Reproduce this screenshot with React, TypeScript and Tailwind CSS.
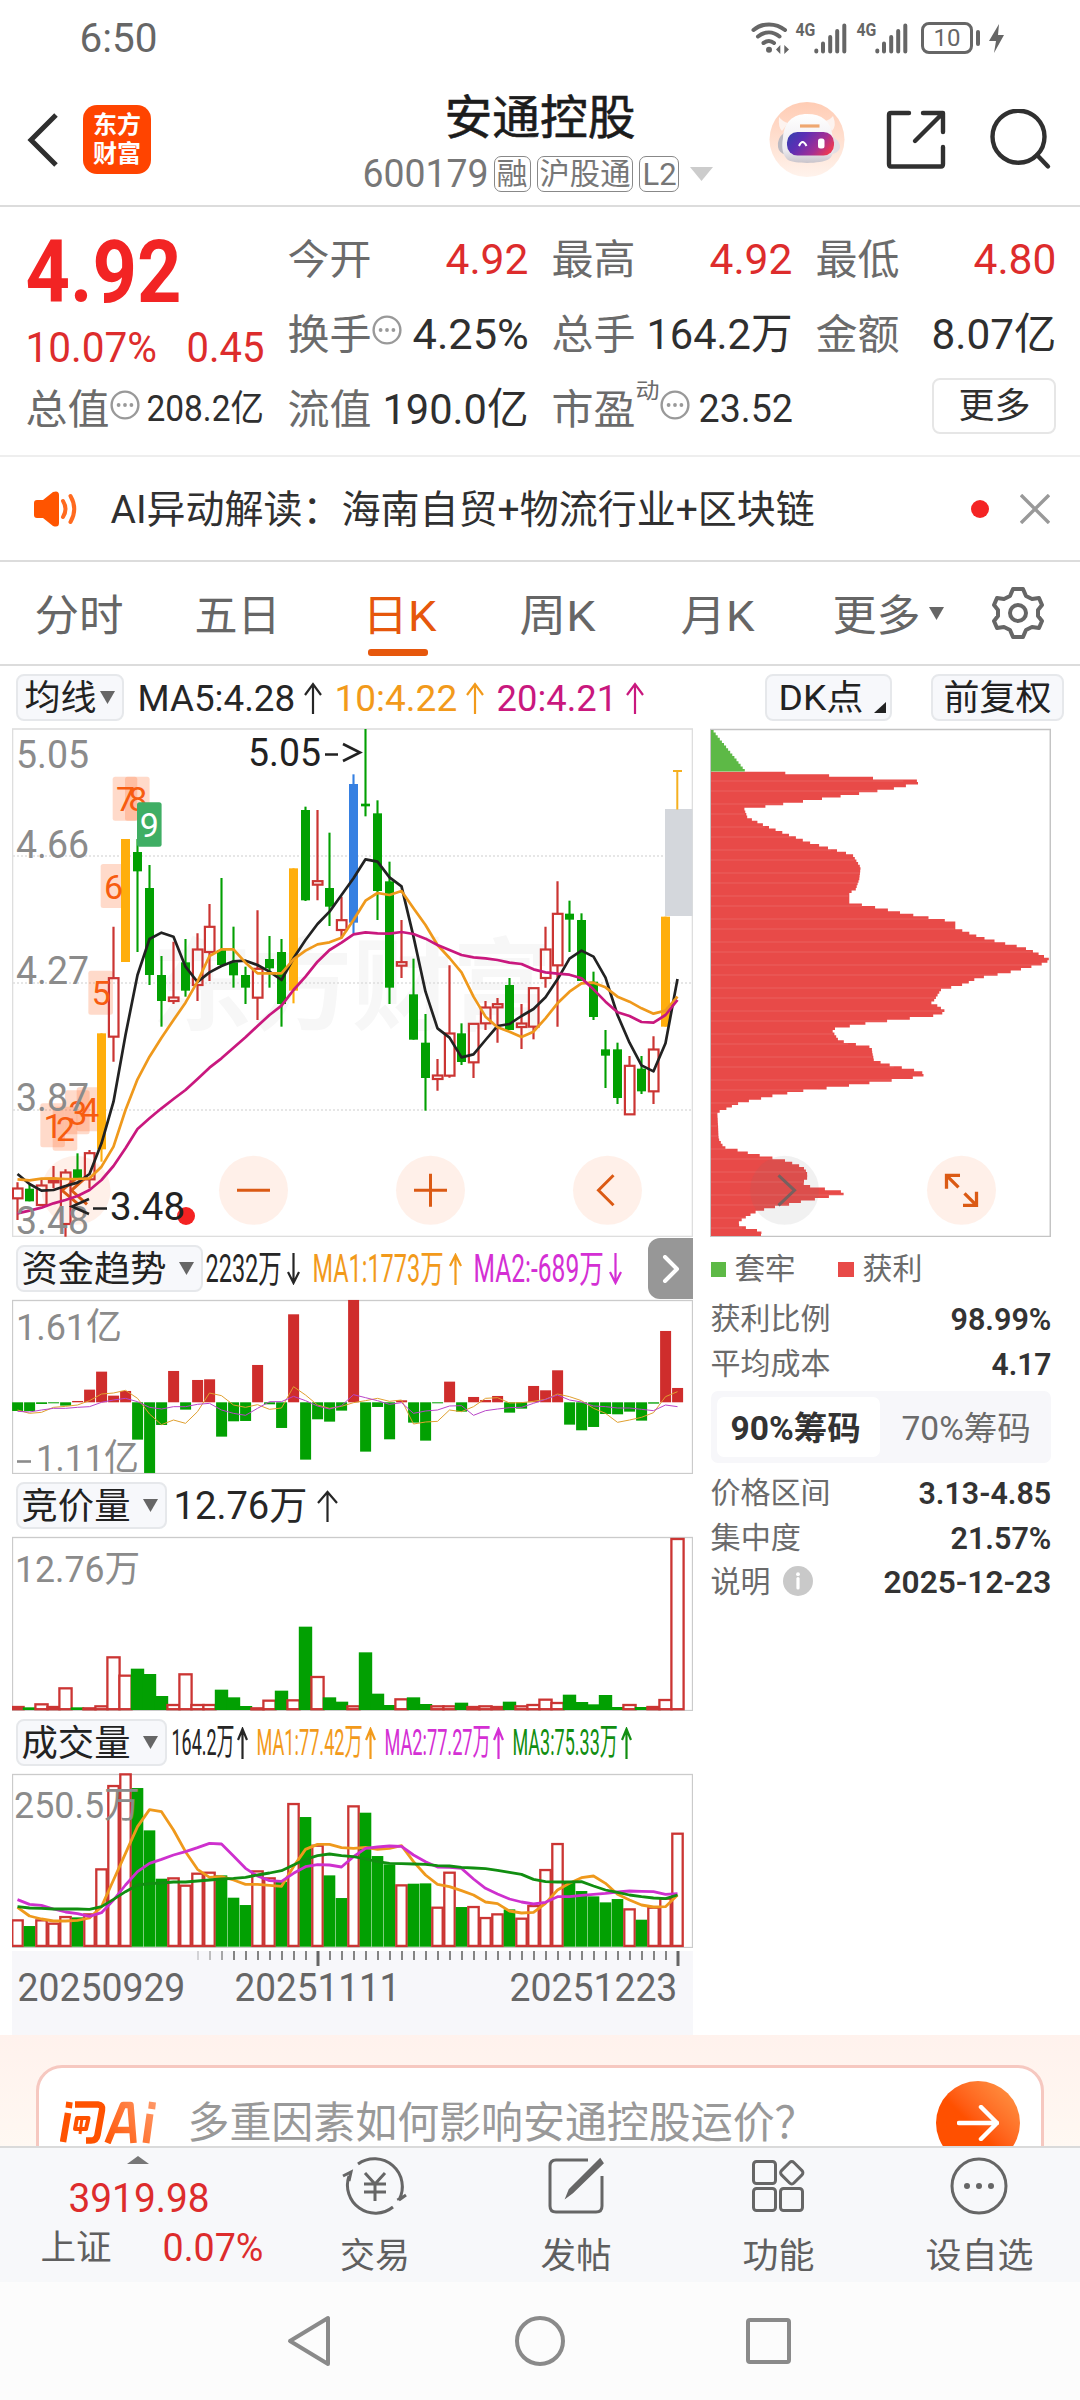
import { useLayoutEffect, useRef, useState } from "react";
import type { ReactNode } from "react";

const GREEN = "#02a002";
const RED = "#cb3533";
const N = 56;
const cx = (i: number) => 17.5 + 12 * i;

/* Text stretched horizontally so that it fills a fixed width. */
function Fit({ w, className = "", children }: { w: number; className?: string; children: ReactNode }) {
  const ref = useRef<HTMLSpanElement>(null);
  const [k, setK] = useState(1);
  useLayoutEffect(() => {
    if (ref.current) setK((w + 3) / ref.current.offsetWidth);
  }, [w]);
  return (
    <span className={"inline-flex shrink-0 whitespace-nowrap " + className} style={{ width: w }}>
      <span
        ref={ref}
        className="inline-block shrink-0 origin-left"
        style={{ transform: `translateX(-1.5px) scaleX(${k})` }}
      >
        {children}
      </span>
    </span>
  );
}

function Arrow({ w, down = false, className = "" }: { w: number; down?: boolean; className?: string }) {
  return (
    <svg width={w} height={32} viewBox={`0 0 ${w} 32`} className={"shrink-0 " + className} fill="none" stroke="currentColor" strokeWidth={2.2}>
      <path d={down ? `M${w / 2} 0V30M1 19L${w / 2} 30L${w - 1} 19` : `M${w / 2} 32V2M1 13L${w / 2} 2L${w - 1} 13`} />
    </svg>
  );
}

function Caret({ className = "" }: { className?: string }) {
  return (
    <svg width={15} height={13} viewBox="0 0 15 13" className={"shrink-0 " + className}>
      <path d="M0 0H15L7.5 13Z" fill="currentColor" />
    </svg>
  );
}

function Dots({ className = "" }: { className?: string }) {
  return (
    <svg width={30} height={30} viewBox="0 0 30 30" className={"relative -top-1 shrink-0 " + className}>
      <circle cx={15} cy={15} r={13.4} fill="none" stroke="#999" strokeWidth={2.4} />
      <circle cx={8.6} cy={15} r={1.9} fill="#999" />
      <circle cx={15} cy={15} r={1.9} fill="#999" />
      <circle cx={21.4} cy={15} r={1.9} fill="#999" />
    </svg>
  );
}

function Label({ x, y, w, size = 39, fill = "#8b8b8b", children }: { x: number; y: number; w: number; size?: number; fill?: string; children: string }) {
  return (
    <text x={x - 1} y={y} textLength={w + 2} lengthAdjust="spacingAndGlyphs" fontSize={size} fill={fill}>
      {children}
    </text>
  );
}

function Signal() {
  return (
    <svg width={33} height={31} viewBox="0 0 33 31" className="shrink-0">
      <g stroke="#666" strokeWidth={4} strokeLinecap="round">
        <path d="M2.3 28.5V27.5M9 28.5V20.5M16.200 28.5V14M23.200 28.5V8M30.300 28.5V2.500" />
      </g>
    </svg>
  );
}

function StatusBar() {
  return (
    <div className="flex h-[76px] items-center text-[#666]">
      <Fit w={75} className="ml-[81px] text-[41px] leading-[76px]">6:50</Fit>
      <div className="ml-[595px] flex h-8 items-start">
        <svg width={38} height={32} viewBox="0 0 38 32" fill="none" stroke="#666" strokeWidth={4} strokeLinecap="round">
          <path d="M2.500 8C11 0.500 25 0.500 34 8M7 14.500C14 9 22 9 28.500 14.500M12.500 21C16 18.500 20 18.500 23 21" />
          <circle cx={18} cy={27.700} r={3} fill="#666" stroke="none" />
          <path d="M25 27.500L29.300 23V32ZM38 27.500L33.300 23V32Z" fill="#666" stroke="none" />
        </svg>
        <Fit w={17} className="ml-[8px] text-[19px] leading-[16px] font-bold">4G</Fit>
        <div className="mt-px"><Signal /></div>
        <Fit w={17} className="ml-[11px] text-[19px] leading-[16px] font-bold">4G</Fit>
        <div className="mt-px"><Signal /></div>
        <div className="ml-[13px] flex h-8 w-[52px] items-center justify-center rounded-[8px] border-[3px] border-[#666] text-[24px] leading-none">
          <Fit w={24}>10</Fit>
        </div>
        <div className="mt-2 ml-[3px] h-4 w-[4px] rounded bg-[#666]" />
        <svg width={16} height={30} viewBox="0 0 16 30" className="mt-0.5 ml-[9px]">
          <path d="M10 0L0 17H7L5 29L15 11H9Z" fill="#666" />
        </svg>
      </div>
    </div>
  );
}

function Robot() {
  return (
    <svg width={78} height={78} viewBox="769 101 78 78">
      <defs>
        <linearGradient id="halo" x1="0" y1="0" x2="0" y2="1">
          <stop offset="0" stopColor="#ffccb4" />
          <stop offset="1" stopColor="#fff3ec" />
        </linearGradient>
        <linearGradient id="visor" x1="0" y1="0.2" x2="1" y2="0.6">
          <stop offset="0" stopColor="#3a3fae" />
          <stop offset="0.3" stopColor="#5b2fb5" />
          <stop offset="0.7" stopColor="#a22f95" />
          <stop offset="1" stopColor="#ea3a55" />
        </linearGradient>
        <linearGradient id="shell" x1="0" y1="0" x2="0" y2="1">
          <stop offset="0" stopColor="#ffffff" />
          <stop offset="0.75" stopColor="#eceaee" />
          <stop offset="1" stopColor="#c9c4cb" />
        </linearGradient>
      </defs>
      <circle cx={808} cy={139.5} r={37.5} fill="url(#halo)" />
      <path d="M780 117Q779 127 783 131L789 123Q784 122 780 117ZM834 116Q838 126 833 131L826 121Q831 120 834 116Z" fill="#fdf3ef" />
      <path d="M785 133Q778 138 779 147Q780 153 787 155Z" fill="#bcbac2" />
      <path d="M834 137Q842 142 841 148Q839 153 833 154Z" fill="#e2dfe4" />
      <path d="M784 138C785 122 794 114 808 114C823 114 832 121 833.500 136C836 146 835 156 830 159C822 164 797 164 789 160C784 156 782 148 784 138Z" fill="url(#shell)" />
      <rect x={788} y={132} width={47} height={23.500} rx={10.500} fill="url(#visor)" />
      <path d="M800 146Q803.500 138 807.500 146" fill="none" stroke="#fff" strokeWidth={2} />
      <rect x={819} y={138.500} width={6.500} height={10} rx={2.500} fill="#fff" />
      <path d="M801 126H820.500" stroke="#efa770" strokeWidth={3.200} />
    </svg>
  );
}

function Header() {
  return (
    <div className="flex h-[131px] border-b-2 border-[#dcdcdc]">
      <div className="mt-[37px] ml-[27px] flex h-[54px] w-8 items-center">
        <svg width={32} height={54} viewBox="0 0 32 54" fill="none" stroke="#2f2f2f" strokeWidth={5}>
          <path d="M29 2L4 27L29 52" />
        </svg>
      </div>
      <div className="mt-[29px] ml-[24px] flex h-[69px] w-[68px] flex-col items-center justify-center rounded-[14px] bg-[#ff4400] text-[24px] leading-[29px] font-bold text-white">
        <div>东方</div>
        <div>财富</div>
      </div>
      <div className="ml-[213px] flex w-[350px] flex-col">
        <div className="flex h-[79px] items-center pt-[4px] pl-[82px]">
          <Fit w={188} className="text-[47px] leading-[62px] text-[#1c1c1c] [-webkit-text-stroke:0.6px_#1c1c1c]">安通控股</Fit>
        </div>
        <div className="flex h-[38px] items-center text-[#777]">
          <Fit w={123} className="text-[38px] leading-[38px]">600179</Fit>
          <div className="ml-[7px] flex h-9 w-[37px] items-center rounded-[7px] border border-[#888] pl-[3px] text-[30px] leading-none"><Fit w={28}>融</Fit></div>
          <div className="ml-[6px] flex h-9 w-[96px] items-center rounded-[7px] border border-[#888] pl-[3px] text-[30px] leading-none"><Fit w={88}>沪股通</Fit></div>
          <div className="ml-[6px] flex h-9 w-[40px] items-center rounded-[7px] border border-[#888] pl-[4px] text-[31px] leading-none"><Fit w={31}>L2</Fit></div>
          <svg width={23} height={14} viewBox="0 0 23 14" className="ml-[11px]"><path d="M0 0H23L11.500 14Z" fill="#ccc" /></svg>
        </div>
      </div>
      <div className="mt-[25px] ml-[54px] flex h-[78px] items-center">
        <Robot />
        <svg width={60} height={60} viewBox="0 0 60 60" fill="none" stroke="#303030" strokeWidth={4.400} strokeLinecap="round" strokeLinejoin="round" className="ml-[40px]">
          <path d="M23 3H5Q3 3 3 5V54Q3 56.500 5 56.500H55Q57 56.500 57 54V37" />
          <path d="M37 3H57V22M56 4L29 31" />
        </svg>
        <svg width={62} height={62} viewBox="0 0 62 62" fill="none" stroke="#303030" strokeWidth={4.400} strokeLinecap="round" className="ml-[44px]">
          <circle cx={28.500} cy={27.700} r={26} />
          <path d="M47 46L58 57.500" />
        </svg>
      </div>
    </div>
  );
}

function Name({ children }: { children: string }) {
  return <Fit w={81} className="relative top-[1.5px] text-[41px] leading-[50px] text-[#6b6b6b]">{children}</Fit>;
}

function Quote() {
  const red = "text-[43px] leading-[50px] text-[#dd2c2c]";
  const dark = "text-[43px] leading-[50px] text-[#2f2f2f]";
  return (
    <div className="flex h-[250px] gap-[26px] border-b-2 border-[#eee] pt-[14px] pl-[27px]">
      <div className="flex w-[236px] flex-col">
        <div className="flex h-[101px] items-center"><Fit w={153} className="text-[88px] leading-[100px] font-bold text-[#f22424]">4.92</Fit></div>
        <div className="flex h-[49px] items-center justify-between">
          <Fit w={129} className={red}>10.07%</Fit>
          <Fit w={75} className={red}>0.45</Fit>
        </div>
        <div className="flex h-[75px] items-center">
          <Name>总值</Name>
          <Dots className="ml-[2px]" />
          <Fit w={114} className="ml-[8px] text-[36px] leading-[50px] text-[#2f2f2f]">208.2亿</Fit>
        </div>
      </div>
      <div className="flex w-[238px] flex-col">
        <div className="flex h-[75px] items-center justify-between"><Name>今开</Name><Fit w={80} className={red}>4.92</Fit></div>
        <div className="flex h-[75px] items-center"><Name>换手</Name><Dots className="ml-[2px]" /><Fit w={113} className={"ml-auto " + dark}>4.25%</Fit></div>
        <div className="flex h-[75px] items-center justify-between"><Name>流值</Name><Fit w={143} className={dark}>190.0亿</Fit></div>
      </div>
      <div className="flex w-[238px] flex-col">
        <div className="flex h-[75px] items-center justify-between"><Name>最高</Name><Fit w={80} className={red}>4.92</Fit></div>
        <div className="flex h-[75px] items-center justify-between"><Name>总手</Name><Fit w={143} className={dark}>164.2万</Fit></div>
        <div className="flex h-[75px] items-center">
          <Name>市盈</Name>
          <Fit w={21} className="relative -top-[18px] ml-[3px] text-[22px] leading-[22px] text-[#6b6b6b]">动</Fit>
          <Dots className="ml-[2px]" />
          <Fit w={91} className="ml-auto text-[38px] leading-[50px] text-[#2f2f2f]">23.52</Fit>
        </div>
      </div>
      <div className="flex w-[238px] flex-col">
        <div className="flex h-[75px] items-center justify-between"><Name>最低</Name><Fit w={80} className={red}>4.80</Fit></div>
        <div className="flex h-[75px] items-center justify-between"><Name>金额</Name><Fit w={122} className={dark}>8.07亿</Fit></div>
        <div className="flex h-[75px] items-center justify-end">
          <div className="relative -top-[3px] left-px flex h-[56px] w-[124px] items-center justify-center rounded-[8px] border-2 border-[#e6e6e6]">
            <Fit w={69} className="relative top-px text-[35px] leading-[50px] text-[#2f2f2f]">更多</Fit>
          </div>
        </div>
      </div>
    </div>
  );
}

function Notice() {
  return (
    <div className="flex h-[105px] items-center border-b-2 border-[#dcdcdc]">
      <svg width={44} height={36} viewBox="0 0 44 36" className="ml-[34px]">
        <path d="M3 9Q0 9 0 12V24Q0 27 3 27H9L19 35Q25 37 25 32V4Q25 -1 19 1L9 9Z" fill="#ff5400" />
        <path d="M29 10Q34 18 29 26M36.500 5Q44 18 36.500 31" fill="none" stroke="#ff6a1f" strokeWidth={4} strokeLinecap="round" />
      </svg>
      <Fit w={701} className="relative top-px ml-[34px] text-[39px] leading-[60px] text-[#303030]">AI异动解读：海南自贸+物流行业+区块链</Fit>
      <div className="ml-[158px] h-[18px] w-[18px] rounded-full bg-[#f42424]" />
      <svg width={30} height={30} viewBox="0 0 30 30" className="ml-[31px]" stroke="#999" strokeWidth={3.400}>
        <path d="M1 1L29 29M29 1L1 29" />
      </svg>
    </div>
  );
}

function Tabs() {
  const t = "relative top-[3px] text-[43px] leading-[60px]";
  return (
    <div className="flex h-[104px] items-center border-b-2 border-[#dcdcdc] text-[#666]">
      <Fit w={86} className={"ml-[36px] " + t}>分时</Fit>
      <Fit w={83} className={"ml-[74px] " + t}>五日</Fit>
      <div className="relative ml-[85px] flex text-[#e6570c]">
        <Fit w={71} className={t}>日K</Fit>
        <div className="absolute top-[66px] left-[4px] h-[7px] w-[60px] rounded-[3px] bg-[#e6570c]" />
      </div>
      <Fit w={73} className={"ml-[86px] " + t}>周K</Fit>
      <Fit w={71} className={"ml-[88px] " + t}>月K</Fit>
      <Fit w={85} className={"ml-[81px] " + t}>更多</Fit>
      <Caret className="ml-[10px]" />
      <svg width={52} height={52} viewBox="-26 -26 52 52" className="ml-[48px]" fill="none" stroke="#666" strokeWidth={4} strokeLinejoin="round">
        <path d="M-5 -24H5L8 -17L14 -14L21 -15L24 -8L20 -3V3L24 8L21 15L14 14L8 17L5 24H-5L-8 17L-14 14L-21 15L-24 8L-20 3V-3L-24 -8L-21 -15L-14 -14L-8 -17Z" />
        <circle r={8} />
      </svg>
    </div>
  );
}

const chip = "flex h-[47px] items-center rounded-[8px] border-2 border-[#e6e8eb] bg-[#f7f8fb] text-[#222]";

function Averages() {
  const t = "text-[37px] leading-[50px]";
  return (
    <div className="flex h-[63px] -mb-px items-center text-[#262626]">
      <div className={chip + " ml-[16px] w-[108px] pl-[8px]"}>
        <Fit w={69} className="relative top-px text-[35px] leading-[44px]">均线</Fit>
        <Caret className="ml-[5px] text-[#666]" />
      </div>
      <Fit w={155} className={"relative top-px ml-[15px] " + t}>MA5:4.28</Fit>
      <Arrow w={18} className="ml-[10px]" />
      <Fit w={120} className={"relative top-px ml-[14px] text-[#f29a1b] " + t}>10:4.22</Fit>
      <Arrow w={18} className="ml-[10px] text-[#f29a1b]" />
      <Fit w={118} className={"relative top-px ml-[14px] text-[#c9187e] " + t}>20:4.21</Fit>
      <Arrow w={18} className="ml-[10px] text-[#c9187e]" />
      <div className={chip + " ml-[121px] w-[127px] pl-[13px]"}>
        <Fit w={82} className="relative top-px text-[35px] leading-[44px]">DK点</Fit>
        <svg width={12} height={11} viewBox="0 0 12 11" className="mt-5 ml-[12px]"><path d="M12 0V11H0Z" fill="#222" /></svg>
      </div>
      <div className={chip + " ml-[39px] w-[133px] pl-[12px]"}>
        <Fit w={105} className="relative top-px text-[35px] leading-[44px]">前复权</Fit>
      </div>
    </div>
  );
}

/* kind, high, body top, body bottom, low: thirds of a pixel below y = 720 */
type Candle = [string, number, number, number, number];
const candles: Candle[] = [
  ["r", 1387, 1404, 1435, 1500], ["g", 1395, 1406, 1444, 1444], ["r", 1380, 1395, 1455, 1455], ["r", 1338, 1380, 1387, 1405],
  ["r", 1348, 1356, 1512, 1550], ["g", 1300, 1348, 1378, 1378], ["r", 1290, 1298, 1378, 1405], ["y", 940, 940, 1288, 1325],
  ["r", 620, 773, 950, 1025], ["y", 357, 357, 726, 726], ["g", 357, 396, 454, 696], ["g", 435, 504, 765, 795],
  ["g", 708, 765, 843, 920], ["r", 665, 831, 843, 852], ["g", 657, 727, 812, 830], ["r", 640, 687, 795, 843],
  ["r", 552, 619, 696, 783], ["g", 474, 690, 735, 735], ["g", 620, 727, 766, 803], ["g", 740, 765, 803, 852],
  ["r", 571, 745, 833, 900], ["g", 648, 717, 745, 803], ["g", 657, 696, 852, 920], ["y", 445, 445, 812, 850],
  ["g", 260, 270, 541, 543], ["r", 270, 482, 494, 541], ["g", 338, 504, 560, 618], ["r", 530, 599, 630, 655],
  ["b", 163, 192, 608, 640], ["g", 27, 251, 259, 289], ["g", 241, 280, 513, 600], ["g", 425, 484, 803, 852],
  ["r", 600, 725, 737, 774], ["g", 716, 823, 959, 959], ["g", 882, 968, 1074, 1172], ["r", 1017, 1065, 1077, 1112],
  ["r", 736, 939, 1067, 1073], ["g", 910, 940, 1026, 1035], ["r", 910, 910, 1027, 1074], ["r", 843, 861, 910, 930],
  ["r", 834, 851, 862, 968], ["g", 774, 795, 930, 930], ["r", 852, 909, 921, 987], ["r", 803, 803, 920, 958],
  ["r", 620, 687, 774, 803], ["r", 484, 580, 736, 920], ["g", 542, 581, 599, 696], ["g", 580, 600, 783, 783],
  ["g", 755, 785, 891, 900], ["g", 930, 988, 1007, 1104], ["g", 968, 988, 1134, 1152], ["r", 1008, 1036, 1183, 1183],
  ["g", 1008, 1046, 1114, 1122], ["r", 949, 987, 1114, 1152], ["y", 590, 590, 920, 920],
];
const ma5 = [1362, 1392, 1412, 1410, 1398, 1388, 1362, 1270, 1145, 945, 765, 657, 638, 650, 740, 786, 757, 738, 724, 722, 735, 755, 780, 715, 660, 612, 575, 525, 475, 418, 425, 472, 499, 650, 815, 925, 953, 1012, 1003, 960, 918, 912, 888, 867, 832, 778, 716, 692, 710, 773, 885, 968, 1036, 1054, 970, 777];
const ma10 = [1378, 1381, 1376, 1375, 1377, 1377, 1375, 1340, 1280, 1170, 1078, 1010, 953, 900, 848, 785, 708, 688, 688, 728, 760, 760, 760, 718, 692, 673, 667, 653, 600, 542, 519, 525, 513, 565, 615, 675, 714, 757, 830, 890, 922, 935, 951, 935, 895, 850, 815, 790, 788, 802, 830, 845, 865, 881, 872, 830];
const ma20 = [1480, 1472, 1463, 1450, 1440, 1428, 1410, 1380, 1338, 1285, 1227, 1195, 1165, 1137, 1110, 1077, 1043, 1015, 983, 952, 918, 885, 857, 810, 770, 725, 690, 668, 643, 637, 640, 641, 636, 642, 656, 675, 690, 705, 712, 715, 720, 728, 732, 748, 757, 761, 764, 775, 808, 845, 877, 888, 906, 908, 885, 840];

const points = (v: number[], top: number) => v.slice(0, N).map((y, i) => `${cx(i)},${top + y / 3}`).join(" ");

const signals: [string, number, number][] = [
  ["1", 121, 1150], ["2", 158, 1160], ["3", 195, 1111], ["4", 230, 1102], ["5", 265, 752], ["6", 302, 432], ["7", 338, 170], ["8", 375, 170],
];

function RoundButton({ x, gray = false, children }: { x: number; gray?: boolean; children: ReactNode }) {
  return (
    <g transform={`translate(${x} 1190.300)`} fill="none" stroke={gray ? "#77605f" : "#db5a14"} strokeWidth={3}>
      <circle r={34.500} fill={gray ? "#777" : "#ff7a33"} fillOpacity={gray ? 0.1 : 0.11} stroke="none" />
      {children}
    </g>
  );
}

function PriceChart() {
  const fills: Record<string, string> = { g: GREEN, y: "#ffae0c", b: "#3680e2" };
  return (
    <svg width={681} height={509} viewBox="12 728 681 509" className="block">
      <rect x={12.500} y={729} width={680} height={507.500} fill="#fff" stroke="#dedede" strokeWidth={1.600} />
      <text x={152} y={1022} fontSize={100} fontWeight={700} fill="#f7f7f7">东方财富</text>
      <g stroke="#dedede" strokeWidth={1.400} strokeDasharray="2 2">
        <path d="M13 856H692M13 983H692M13 1110H692" />
      </g>
      {signals.map(([t, x, y]) => (
        <rect key={t} x={x / 3} y={720 + y / 3} width={24.600} height={44} rx={2.500} fill="#ff6a2a" fillOpacity={0.25} />
      ))}
      <RoundButton x={76}><path d="M2.500 -14L-14 0L2.500 14M11 -14L-4.500 0L11 14" /></RoundButton>
      {candles.map(([k, h, t, b, l], i) => {
        const x = cx(i);
        const Y = (v: number) => 720 + v / 3;
        if (k === "r")
          return (
            <g key={i} stroke={RED} strokeWidth={2.2} fill="none">
              <path d={`M${x} ${Y(h)}V${Y(t)}M${x} ${Y(b)}V${Y(l)}`} />
              <rect x={x - 4.600} y={Y(t) + 0.500} width={9.600} height={Y(b) - Y(t) - 0.500} />
            </g>
          );
        return (
          <g key={i} fill={fills[k]}>
            <rect x={x - 1.050} y={Y(h)} width={2.100} height={Y(l) - Y(h)} />
            <rect x={x - 4.500} y={Y(t)} width={9} height={Y(b) - Y(t)} />
          </g>
        );
      })}
      <rect x={665} y={809} width={27.500} height={107} fill="#d4d7dc" />
      <path d="M673 771H682M677.300 771V809.500" stroke="#f5b020" strokeWidth={2} fill="none" />
      <g fill="none" strokeWidth={2.700} strokeLinejoin="round">
        <polyline points={points(ma5, 720)} stroke="#222" />
        <polyline points={points(ma10, 720)} stroke="#ef991c" />
        <polyline points={points(ma20, 720)} stroke="#c9187e" />
      </g>
      {signals.map(([t, x, y]) => (
        <text key={t} x={x / 3 + 12.800} y={720 + y / 3 + 34.500} fontSize={34} textAnchor="middle" fill="#f75c10">{t}</text>
      ))}
      <rect x={137} y={802.300} width={24.600} height={44.400} rx={2.500} fill="#3fae64" />
      <text x={149.300} y={836.500} fontSize={34} textAnchor="middle" fill="#fff">9</text>
      <Label x={17} y={768} w={71}>5.05</Label>
      <Label x={17} y={857.500} w={71}>4.66</Label>
      <Label x={17} y={984} w={71}>4.27</Label>
      <Label x={17} y={1111} w={71}>3.87</Label>
      <Label x={17} y={1234} w={71}>3.48</Label>
      <Label x={249} y={766} w={71} fill="#222">5.05</Label>
      <path d="M325 754.500H338M343 744L360 752.500L343 761" fill="none" stroke="#222" strokeWidth={2.600} />
      <circle cx={186} cy={1216} r={9} fill="#f42222" />
      <Label x={111} y={1220} w={73} fill="#222">3.48</Label>
      <path d="M93 1208.500H107M89 1199L72 1206.500L89 1214" fill="none" stroke="#222" strokeWidth={2.600} />
      <RoundButton x={253.500}><path d="M-16.500 0H16.500" /></RoundButton>
      <RoundButton x={430.500}><path d="M-16.500 0H16.500M0 -16.500V16.500" /></RoundButton>
      <RoundButton x={607.500}><path d="M6 -15L-9 0L6 15" /></RoundButton>
    </svg>
  );
}

/* y and right edge of the holding-cost profile, thirds of a pixel */
const profile: [number, number][] = [
  [155, 170], [163, 303], [171, 439], [179, 575], [187, 711], [195, 675], [203, 637], [211, 600], [219, 542], [227, 486], [235, 428], [243, 371], [250, 318], [257, 264], [265, 211], [270, 163], [295, 172], [320, 225], [345, 289], [370, 356], [408, 488], [445, 512], [480, 508], [512, 497], [522, 478], [550, 478], [560, 530], [570, 581], [578, 618], [586, 657], [594, 703], [602, 754], [609, 796], [627, 796], [655, 872], [670, 930], [685, 997], [695, 1025], [710, 1058], [722, 1080], [733, 1065], [748, 1005], [763, 945], [770, 900], [780, 857], [795, 825], [803, 797], [810, 755], [845, 732], [848, 715], [858, 740], [877, 766], [887, 750], [893, 715], [901, 630], [909, 568], [916, 506], [924, 467], [931, 424], [962, 445], [970, 467], [978, 510], [986, 551], [992, 545], [1025, 552], [1032, 580], [1038, 600], [1046, 638], [1054, 676], [1062, 700], [1073, 701], [1078, 654], [1086, 591], [1093, 529], [1101, 467], [1108, 405], [1116, 333], [1124, 286], [1132, 240], [1140, 207], [1147, 173], [1155, 140], [1170, 108], [1180, 82], [1260, 86], [1285, 102], [1290, 130], [1299, 163], [1307, 200], [1315, 237], [1322, 278], [1337, 320], [1345, 340], [1360, 351], [1378, 352], [1390, 338], [1399, 345], [1406, 381], [1414, 432], [1422, 480], [1430, 432], [1438, 391], [1446, 343], [1454, 310], [1462, 264], [1470, 228], [1480, 195], [1500, 158], [1515, 142], [1523, 155], [1530, 185], [1537, 215], [1550, 213],
];
function edgeAt(y: number) {
  for (let i = 1; i < profile.length; i++) {
    const [y0, x0] = profile[i - 1];
    const [y1, x1] = profile[i];
    if (y <= y1) return x0 + ((x1 - x0) * (y - y0)) / (y1 - y0);
  }
  return 213;
}
const STEP = 7.75;
const redRows = Array.from({ length: 180 }, (_, i) => 155 + i * STEP);
const redPath = "M711 771.700" + redRows.map((y) => `V${(720 + y / 3).toFixed(2)}H${(690 + edgeAt(y + STEP * 0.9) / 3).toFixed(1)}`).join("") + "V1236H711Z";
const greenPath = "M711 730" + Array.from({ length: 16 }, (_, i) => `H${(711.500 + (i + 1) * 2.080).toFixed(1)}V${(730 + (i + 1) * 2.600).toFixed(1)}`).join("") + "H711Z";

function CostChart() {
  return (
    <svg width={341} height={509} viewBox="710 728 341 509" className="block">
      <rect x={710.800} y={729.500} width={339.500} height={507} fill="#fff" stroke="#c4c4c4" strokeWidth={1.500} />
      <path d={redPath} fill="#e84a48" />
      <path d={greenPath} fill="#5db946" />
      <g stroke="#fff" strokeOpacity={0.13} strokeWidth={1}>
        {Array.from({ length: 20 }, (_, k) => (
          <path key={k} d={`M711 ${781 + k * 23}h${Math.max(6, edgeAt(183 + k * 69) / 3 - 22)}M711 ${791 + k * 23}h${Math.max(6, edgeAt(213 + k * 69) / 3 - 22)}`} />
        ))}
      </g>
      <RoundButton x={784.500} gray><path d="M-6 -15L10 0L-6 15" /></RoundButton>
      <RoundButton x={961.500}>
        <path d="M-15 -1.500V-15H-1.500M-15 -15L-3 -3M15 1.500V15H1.500M15 15L3 3" strokeWidth={3.300} />
      </RoundButton>
    </svg>
  );
}

const flow = [-26, -26, -5, -3, -10, 4, 38, 92, 20, 34, -112, -212, -68, 94, -22, 67, 69, -103, -57, -56, 112, -6, -77, 264, -172, -51, -58, -25, 307, -148, -14, -111, 6, -61, -115, -3, 62, -28, 16, 7, 19, -31, -19, 49, 36, 96, -67, -84, -74, -35, -36, -28, -55, -4, 214, 43];
const flowA = [540, 550, 547, 532, 529, 525, 512, 492, 489, 481, 505, 552, 584, 570, 580, 545, 489, 497, 525, 532, 524, 538, 534, 470, 495, 525, 535, 529, 518, 512, 505, 514, 510, 582, 576, 574, 540, 545, 530, 505, 503, 519, 518, 514, 508, 492, 500, 512, 535, 550, 577, 570, 562, 548, 500, 485];
const flowB = [544, 546, 540, 535, 535, 532, 530, 517, 510, 505, 515, 532, 537, 530, 530, 523, 520, 540, 550, 556, 535, 515, 515, 499, 512, 528, 537, 527, 494, 503, 512, 523, 518, 550, 543, 540, 528, 527, 556, 542, 537, 533, 532, 520, 508, 495, 510, 516, 528, 530, 534, 534, 538, 542, 525, 530];

function FlowChart() {
  const z = 1402.300;
  return (
    <svg width={681} height={175} viewBox="12 1299 681 175" className="block">
      <rect x={12.500} y={1300.500} width={680} height={173} fill="#fff" stroke="#cbcbcb" strokeWidth={1.300} />
      <Label x={17} y={1340} w={104} size={37}>1.61亿</Label>
      <path d="M17 1461.500H31" stroke="#8b8b8b" strokeWidth={2.600} />
      <Label x={37} y={1471} w={101} size={37}>1.11亿</Label>
      {flow.map((v, i) => (
        <rect key={i} x={cx(i) - 5.400} y={v > 0 ? z - v / 3 : z} width={11} height={Math.abs(v) / 3} fill={v > 0 ? "#cf2d2c" : GREEN} />
      ))}
      <g fill="none" strokeWidth={1}>
        <polyline points={points(flowA, 1230)} stroke="#e0a030" />
        <polyline points={points(flowB, 1230)} stroke="#b845c8" />
      </g>
    </svg>
  );
}

function Bars({ kinds, heights, base, w }: { kinds: string; heights: number[]; base: number; w: number }) {
  return (
    <>
      {heights.map((h, i) =>
        kinds[i] === "g" ? (
          <rect key={i} x={cx(i) - w / 2} y={base - h / 3} width={w} height={h / 3} fill={GREEN} />
        ) : (
          <rect key={i} x={cx(i) - w / 2 + 0.600} y={base - h / 3 + 1} width={w - 1.200} height={Math.max(1, h / 3 - 1.800)} fill="#fff" stroke={RED} strokeWidth={2.300} />
        ),
      )}
    </>
  );
}

const auctionKinds = "rgrrrgrrrrgggrrrrgggrrgrgrggrgggrggrrgrrrgrrrrgggggrgrrr";
const auction = [12, 8, 20, 12, 68, 8, 8, 14, 161, 106, 124, 108, 42, 18, 110, 18, 18, 61, 38, 12, 8, 31, 58, 32, 250, 102, 38, 25, 14, 173, 49, 15, 35, 38, 18, 14, 14, 22, 12, 14, 12, 25, 14, 18, 34, 24, 46, 24, 17, 45, 9, 18, 9, 12, 33, 516];

function AuctionChart() {
  return (
    <svg width={681} height={175} viewBox="12 1536 681 175" className="block">
      <rect x={12.500} y={1537.500} width={680} height={173} fill="#fff" stroke="#cbcbcb" strokeWidth={1.300} />
      <Label x={16} y={1582} w={123} size={37}>12.76万</Label>
      <Bars kinds={auctionKinds} heights={auction} base={1710} w={13.400} />
    </svg>
  );
}

const volKinds = "rgrrrgrrrrgggrrrrgggrrgrgrggrgggrggrrgrrrgrrrrgggggrgrrr";
const volTops = [628, 648, 628, 638, 618, 622, 610, 475, 225, 190, 234, 361, 506, 502, 524, 488, 485, 496, 563, 585, 481, 502, 515, 279, 321, 404, 496, 564, 286, 308, 438, 463, 523, 521, 520, 590, 485, 591, 588, 621, 610, 598, 623, 585, 477, 399, 515, 543, 559, 577, 567, 595, 629, 590, 563, 368];
const volA = [592, 618, 627, 633, 633, 631, 624, 590, 510, 430, 350, 299, 305, 360, 425, 478, 502, 500, 510, 523, 523, 526, 529, 470, 418, 403, 403, 413, 415, 412, 418, 415, 407, 455, 495, 523, 530, 542, 555, 576, 581, 603, 609, 607, 580, 540, 520, 503, 498, 520, 553, 570, 585, 591, 590, 555];
const volB = [569, 583, 586, 597, 606, 611, 619, 608, 570, 525, 485, 460, 448, 435, 425, 413, 400, 402, 438, 475, 498, 512, 514, 490, 470, 464, 465, 471, 440, 415, 411, 408, 409, 435, 455, 471, 472, 475, 507, 535, 552, 567, 576, 582, 577, 560, 560, 556, 553, 550, 546, 543, 544, 545, 553, 551];
const volC = [590, 594, 595, 597, 597, 597, 598, 590, 568, 545, 525, 521, 519, 516, 516, 513, 510, 507, 505, 502, 495, 489, 482, 465, 448, 437, 432, 437, 440, 447, 455, 460, 461, 462, 463, 467, 468, 472, 474, 476, 481, 487, 493, 508, 515, 516, 516, 515, 528, 540, 547, 555, 560, 564, 566, 555];

function VolumeChart() {
  return (
    <svg width={681} height={175} viewBox="12 1773 681 175" className="block">
      <rect x={12.500} y={1774.500} width={680} height={173} fill="#fff" stroke="#cbcbcb" strokeWidth={1.300} />
      <Bars kinds={volKinds} heights={volTops.map((t) => 710 - t)} base={1946.700} w={11.600} />
      <Label x={15} y={1818} w={124} size={37}>250.5万</Label>
      <g fill="none" strokeWidth={2.800} strokeLinejoin="round">
        <polyline points={points(volA, 1710)} stroke="#ef991c" />
        <polyline points={points(volB, 1710)} stroke="#ce30ce" />
        <polyline points={points(volC, 1710)} stroke="#118e11" />
      </g>
    </svg>
  );
}

function TimeAxis() {
  return (
    <div className="mt-[3px] h-[84px] bg-[#f7f7fa]">
      <svg width={681} height={16} viewBox="12 0 681 16" className="block">
        {Array.from({ length: 41 }, (_, i) => {
          const big = i === 10 || i === 40;
          return <path key={i} d={`M${198 + i * 12} 0V${big ? 15 : 9}`} stroke={big ? "#666" : "#777"} strokeWidth={big ? 3 : 1.800} opacity={i < 3 ? 0.3 + i * 0.2 : 1} />;
        })}
      </svg>
      <div className="flex h-[41px] items-center text-[38px] leading-[41px] text-[#666]">
        <Fit w={165} className="relative top-px ml-[7px]">20250929</Fit>
        <Fit w={163} className="relative top-px ml-[52px]">20251111</Fit>
        <Fit w={165} className="relative top-px ml-[112px]">20251223</Fit>
      </div>
    </div>
  );
}

const amber = "text-[#f29a1b]";
const violet = "text-[#d42fd4]";

function IndicatorName({ name, w, box }: { name: string; w: number; box: string }) {
  return (
    <div className={chip + " ml-[4px] justify-between pr-[7px] pl-[5px] " + box}>
      <Fit w={w} className="relative top-px text-[36px] leading-[44px]">{name}</Fit>
      <Caret className="text-[#666]" />
    </div>
  );
}

function Indicators() {
  return (
    <div className="ml-[12px] flex w-[681px] flex-col text-[#262626]">
      <PriceChart />
      <div className="flex h-[62px] items-center pt-px text-[38px] leading-[50px]">
        <IndicatorName name="资金趋势" w={142} box="w-[187px]" />
        <Fit w={73} className="ml-[4px]">2232万</Fit>
        <Arrow w={13} down className="ml-[7px]" />
        <Fit w={128} className={"ml-[14px] " + amber}>MA1:1773万</Fit>
        <Arrow w={13} className={"ml-[7px] " + amber} />
        <Fit w={127} className={"ml-[13px] " + violet}>MA2:-689万</Fit>
        <Arrow w={13} down className={"ml-[7px] " + violet} />
        <div className="ml-auto flex h-[61px] w-[45px] items-center justify-center rounded-l-[12px] bg-[#979797]">
          <svg width={18} height={28} viewBox="0 0 18 28" fill="none" stroke="#fff" strokeWidth={4} strokeLinecap="round" strokeLinejoin="round">
            <path d="M3 2L15 14L3 26" />
          </svg>
        </div>
      </div>
      <FlowChart />
      <div className="flex h-[62px] items-center pt-px text-[39px] leading-[50px]">
        <IndicatorName name="竞价量" w={106} box="w-[151px]" />
        <Fit w={131} className="ml-[8px]">12.76万</Fit>
        <Arrow w={21} className="ml-[11px]" />
      </div>
      <AuctionChart />
      <div className="flex h-[62px] items-center pt-px text-[37px] leading-[50px]">
        <IndicatorName name="成交量" w={106} box="w-[151px]" />
        <Fit w={60} className="ml-[6px]">164.2万</Fit>
        <Arrow w={11} className="ml-[4px]" />
        <Fit w={103} className={"ml-[10px] " + amber}>MA1:77.42万</Fit>
        <Arrow w={11} className={"ml-[4px] " + amber} />
        <Fit w={103} className={"ml-[10px] " + violet}>MA2:77.27万</Fit>
        <Arrow w={11} className={"ml-[4px] " + violet} />
        <Fit w={102} className="ml-[10px] text-[#118e11]">MA3:75.33万</Fit>
        <Arrow w={11} className="ml-[5px] text-[#118e11]" />
      </div>
      <VolumeChart />
      <TimeAxis />
    </div>
  );
}

function StatRow({ name, nw, value, vw, info = false }: { name: string; nw: number; value: string; vw: number; info?: boolean }) {
  return (
    <div className="flex h-[44.500px] items-center pl-[2px]">
      <Fit w={nw} className="relative top-px text-[29.500px] leading-[44px] text-[#6b6b6b]">{name}</Fit>
      {info && (
        <svg width={30} height={30} viewBox="0 0 30 30" className="ml-[14px]">
          <circle cx={15} cy={15} r={15} fill="#c9c9c9" />
          <path d="M15 12.500V22" stroke="#fff" strokeWidth={3.200} strokeLinecap="round" />
          <circle cx={15} cy={8.200} r={1.900} fill="#fff" />
        </svg>
      )}
      <Fit w={vw} className="relative top-px -left-px ml-auto text-[32px] leading-[44px] font-semibold text-[#333]">{value}</Fit>
    </div>
  );
}

function CostPanel() {
  return (
    <div className="ml-[17px] flex w-[341px] flex-col">
      <CostChart />
      <div className="mt-[9px] flex h-[46px] items-center text-[30px] leading-[46px] text-[#6b6b6b]">
        <div className="ml-px h-[15px] w-[15px] bg-[#5db946]" />
        <Fit w={58} className="ml-[10px]">套牢</Fit>
        <div className="ml-[44px] h-[15px] w-[16px] bg-[#e84a48]" />
        <Fit w={57} className="ml-[10px]">获利</Fit>
      </div>
      <div className="mt-[4px]">
        <StatRow name="获利比例" nw={117} value="98.99%" vw={98} />
        <StatRow name="平均成本" nw={117} value="4.17" vw={57} />
      </div>
      <div className="mt-[6px] ml-px flex h-[72px] items-center rounded-[7px] bg-[#f7f7fa] px-[6px]">
        <div className="flex h-[60px] w-[163px] items-center rounded-[7px] bg-white pl-[15px] text-[33px] leading-[60px] text-[#333]">
          <Fit w={127} className="relative top-[2px] font-bold">90%筹码</Fit>
        </div>
        <Fit w={126} className="relative top-[2px] ml-[23px] text-[33px] leading-[60px] text-[#6b6b6b]">70%筹码</Fit>
      </div>
      <div className="mt-[7px]">
        <StatRow name="价格区间" nw={117} value="3.13-4.85" vw={130} />
        <StatRow name="集中度" nw={88} value="21.57%" vw={98} />
        <StatRow name="说明" nw={57} value="2025-12-23" vw={165} info />
      </div>
    </div>
  );
}

function AskBanner() {
  return (
    <div className="h-[111px] overflow-hidden bg-linear-to-b from-[#fff2ed] to-[#fff8f2] px-[36px] pt-[30px]">
      <div className="flex h-[115px] items-center rounded-[26px] border-[3px] border-[#f6c8c0] bg-white">
        <div className="ml-[21px] flex w-[97px] items-center">
          <svg width={97} height={43} viewBox="0 0 97 43" fill="none" strokeLinejoin="round">
            <defs>
              <linearGradient id="ask" gradientUnits="userSpaceOnUse" x1="40" y1="40" x2="97" y2="0">
                <stop offset="0" stopColor="#ff5200" />
                <stop offset="1" stopColor="#ff9a6a" />
              </linearGradient>
            </defs>
            <g stroke="#ff5200" strokeWidth={6.5}>
              <path d="M8 12L3 41" />
              <path d="M9.500 1L8.700 7" />
              <path d="M15 3.500H38Q43 4 42 9L37.500 34Q36.500 39.500 31 39.500H26" />
              <path d="M17 17H28.500L26 28H15Z" strokeWidth={4} />
              <path d="M22 17L20 33" strokeWidth={3} />
            </g>
            <g stroke="url(#ask)" strokeWidth={6.5}>
              <path d="M47.500 42L63 4H70.500L73.500 42M55 29H72" />
              <path d="M90 13L86 42M92.500 1L91.700 8" strokeWidth={7} />
            </g>
          </svg>
        </div>
        <Fit w={626} className="ml-[32px] text-[43px] leading-[60px] text-[#999]">多重因素如何影响安通控股运价？</Fit>
        <div className="ml-[121px] flex h-[84px] w-[84px] items-center justify-center rounded-full bg-linear-to-tr from-[#ff5000] from-45% to-[#ff9a48]">
          <svg width={42} height={36} viewBox="0 0 42 36" fill="none" stroke="#fff" strokeWidth={4.500} strokeLinecap="round" strokeLinejoin="round">
            <path d="M2 18H40M24 2L40 18L24 34" />
          </svg>
        </div>
      </div>
    </div>
  );
}

function NavItem({ label, w, box, children }: { label: string; w: number; box: string; children: ReactNode }) {
  return (
    <div className={"flex flex-col items-center " + box}>
      <svg width={68} height={60} viewBox="-34 -30 68 60" className="mt-[8px]" fill="none" stroke="#666" strokeWidth={3}>
        {children}
      </svg>
      <Fit w={w} className="mt-[16px] text-[35px] leading-[50px] text-[#5f5f5f]">{label}</Fit>
    </div>
  );
}

function BottomNav() {
  return (
    <div className="flex h-[136px] border-t-2 border-[#dadada] bg-[#f7f8fa]">
      <div className="flex w-[275px] flex-col">
        <svg width={22} height={8} viewBox="0 0 22 8" className="mt-[8px] ml-[127px]"><path d="M11 0L22 8H0Z" fill="#777" /></svg>
        <div className="mt-[9px] flex h-[50px] pl-[70px]"><Fit w={138} className="text-[41px] leading-[50px] text-[#dd2c2c]">3919.98</Fit></div>
        <div className="flex h-[50px] items-center pl-[42px]">
          <Fit w={68} className="relative top-px text-[35px] leading-[50px] text-[#5f5f5f]">上证</Fit>
          <Fit w={98} className="ml-[54px] text-[38px] leading-[50px] text-[#dd2c2c]">0.07%</Fit>
        </div>
      </div>
      <NavItem label="交易" w={67} box="w-[200px]">
        <path d="M-17 -22A28 28 0 0 1 24 14L31 9M24 14L23 12M18 21A28 28 0 0 1 -26 -10M-32 -10L-24 -14L-26 -5" />
        <path d="M-10 -13L0 -2L10 -13M0 -2V15M-11 -2H11M-11 6H11" />
      </NavItem>
      <NavItem label="发帖" w={68} box="w-[202px]">
        <path d="M12 -26H-20Q-26 -26 -26 -20V20Q-26 26 -20 26H20Q26 26 26 20V-10" />
        <path d="M24 -26L26 -23L-4 6L-8 9L-6 4Z" fill="#666" />
      </NavItem>
      <NavItem label="功能" w={69} box="w-[202px]">
        <rect x={-24.500} y={-24.500} width={22} height={22} rx={3} />
        <rect x={-24.500} y={2.500} width={22} height={22} rx={3} />
        <rect x={2.500} y={2.500} width={22} height={22} rx={3} />
        <rect x={5} y={-22} width={17.500} height={17.500} rx={3} transform="rotate(45 13.750 -13.250)" />
      </NavItem>
      <NavItem label="设自选" w={105} box="w-[200px]">
        <circle r={27} />
        <g fill="#666" stroke="none"><circle cx={-12} r={3} /><circle r={3} /><circle cx={12} r={3} /></g>
      </NavItem>
    </div>
  );
}

function SystemNav() {
  return (
    <div className="flex h-[118px] items-center bg-[#fcfcfc]">
      <svg width={44} height={52} viewBox="0 0 44 52" className="ml-[287px]" fill="none" stroke="#8a8a8a" strokeWidth={4} strokeLinejoin="round">
        <path d="M41 3V49L3 26Z" />
      </svg>
      <div className="ml-[184px] h-[50px] w-[50px] rounded-full border-4 border-[#8a8a8a]" />
      <div className="ml-[181px] h-[46px] w-[45px] rounded-[4px] border-4 border-[#8a8a8a]" />
    </div>
  );
}

export default function App() {
  return (
    <div className="flex h-[2400px] w-[1080px] flex-col overflow-hidden bg-white font-[Roboto,'Noto_Sans_CJK_SC',sans-serif]">
      <StatusBar />
      <Header />
      <Quote />
      <Notice />
      <Tabs />
      <Averages />
      <div className="flex">
        <Indicators />
        <CostPanel />
      </div>
      <AskBanner />
      <BottomNav />
      <SystemNav />
    </div>
  );
}
